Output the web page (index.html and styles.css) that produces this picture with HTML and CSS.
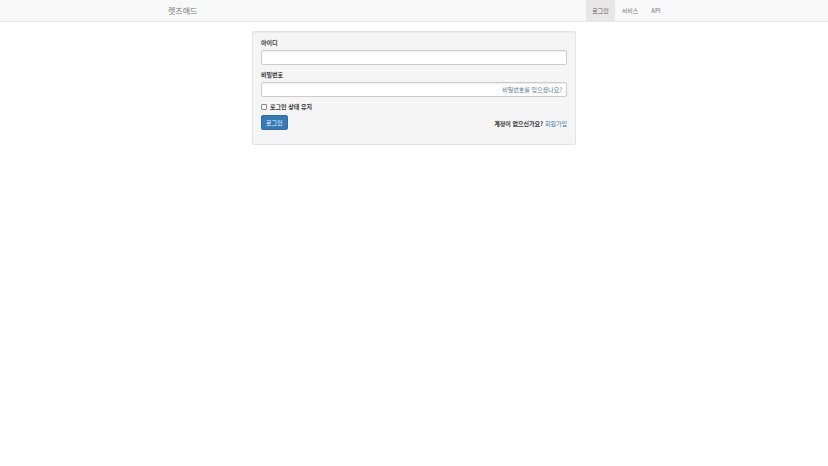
FILE: index.html
```html
<!DOCTYPE html>
<html lang="ko">
<head>
  <meta charset="UTF-8" />
  <meta name="viewport" content="width=device-width, initial-scale=1.0" />
  <title>렛츠애드 - 로그인</title>
  <link rel="stylesheet" href="styles.css">
</head>
<body>
  <nav class="navbar">
    <div class="container nav-inner">
      <a href="#" class="brand">렛츠애드</a>
      <ul class="nav-menu">
        <li><a href="#" class="active">로그인</a></li>
        <li><a href="#">서비스</a></li>
        <li><a href="#">API</a></li>
      </ul>
    </div>
  </nav>

  <main class="container">
    <form class="login-box">
      <div class="form-group">
        <label for="userId">아이디</label>
        <input type="text" id="userId" class="form-control" />
      </div>
      <div class="form-group">
        <label for="userPw">비밀번호</label>
        <div class="pw-wrap">
          <input type="password" id="userPw" class="form-control" />
          <a href="#" class="forgot">비밀번호를 잊으셨나요?</a>
        </div>
      </div>
      <label class="remember">
        <input type="checkbox" /> 로그인 상태 유지
      </label>
      <div class="form-bottom">
        <button type="submit" class="btn-login">로그인</button>
        <span class="signup">계정이 없으신가요? <a href="#">회원가입</a></span>
      </div>
    </form>
  </main>
</body>
</html>
```

FILE: styles.css
```css
body {
  margin: 0;
  padding: 0;
  background-color: white;
  color: #333;
  font-family: "Noto Sans CJK KR", "Noto Sans", sans-serif;
  font-size: 6px;
}

a {
  color: #337ab7;
  text-decoration: none;
}

.container {
  width: 508px;
  margin: 0 auto;
}

.navbar {
  background-color: #f8f8f8;
  border-bottom: 1px solid #e7e7e7;
  height: 21px;
}

.nav-inner {
  display: flex;
  justify-content: space-between;
  align-items: stretch;
  height: 21px;
}

.brand {
  color: #777;
  font-size: 8px;
  line-height: 21px;
  padding: 0 8px;
}

.nav-menu {
  list-style: none;
  margin: 0;
  padding: 0 1px 0 0;
  display: flex;
}

.nav-menu a {
  display: block;
  color: #777;
  line-height: 21px;
  padding: 0 6.5px;
}

.nav-menu a.active {
  background-color: #e7e7e7;
  color: #555;
}

.login-box {
  width: 306px;
  margin: 9px auto 0;
  padding: 7px 8px 14px;
  background-color: #f5f5f5;
  border: 1px solid #e3e3e3;
  border-radius: 2px;
  box-shadow: inset 0 1px 1px rgba(0, 0, 0, 0.05);
}

.form-group {
  margin-bottom: 6px;
}

.form-group label {
  display: block;
  font-weight: bold;
  line-height: 8px;
  margin-bottom: 3px;
}

.form-control {
  display: block;
  box-sizing: border-box;
  width: 100%;
  height: 15px;
  margin: 0;
  padding: 0 4px;
  background-color: white;
  border: 1px solid #ccc;
  border-radius: 2px;
  box-shadow: inset 0 1px 1px rgba(0, 0, 0, 0.075);
}

.pw-wrap {
  position: relative;
}

.forgot {
  position: absolute;
  right: 5px;
  top: 0;
  line-height: 15px;
  color: #4f7396;
}

.remember {
  display: flex;
  align-items: center;
  gap: 3px;
  font-weight: bold;
  line-height: 8px;
  margin: 2px 0 4px;
}

.remember input {
  appearance: none;
  box-sizing: border-box;
  width: 6px;
  height: 6px;
  margin: 0;
  background-color: white;
  border: 1px solid #888;
  border-radius: 1px;
}

.form-bottom {
  display: flex;
  justify-content: space-between;
  align-items: center;
}

.btn-login {
  background-color: #337ab7;
  color: white;
  border: 1px solid #2e6da4;
  border-radius: 2px;
  font-family: inherit;
  font-size: 6px;
  height: 15px;
  padding: 0 4px;
  cursor: pointer;
}

.signup {
  font-weight: bold;
  margin-top: 2px;
}

.signup a {
  font-weight: normal;
}
```
